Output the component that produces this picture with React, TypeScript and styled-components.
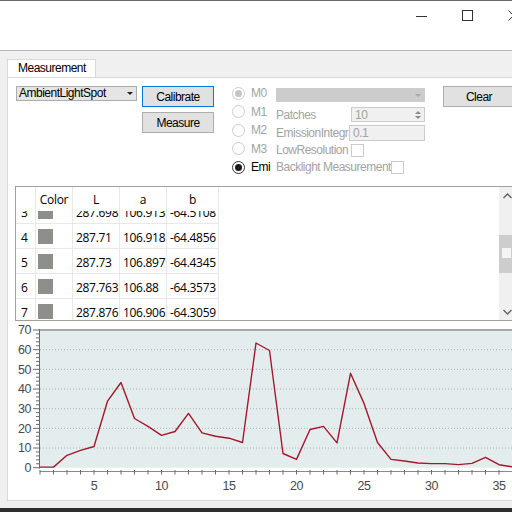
import React from 'react';
import styled, { createGlobalStyle } from 'styled-components';

const Global = createGlobalStyle`
  html, body { margin: 0; padding: 0; width: 512px; height: 512px; overflow: hidden; background: #f0f0f0; }
  #root { width: 512px; height: 512px; }
`;

const Page = styled.div`
  width: 512px;
  height: 512px;
  display: flex;
  flex-direction: column;
  background: #f0f0f0;
  overflow: hidden;
  font-family: "Liberation Sans", Arial, sans-serif;
  font-size: 12px;
  letter-spacing: -0.5px;
  color: #000;
`;

const TopEdge = styled.div`
  flex: none;
  height: 1px;
  background: #6a6a6a;
`;

const TitleBar = styled.div`
  flex: none;
  height: 49px;
  background: #fff;
  border-bottom: 1px solid #b6b6c2;
  display: flex;
  justify-content: flex-end;
  align-items: flex-start;
`;

const CaptionButtons = styled.div`
  display: flex;
  margin-right: -24px;
`;

const CaptionButton = styled.div`
  width: 46px;
  height: 29px;
  display: flex;
  align-items: center;
  justify-content: center;
`;

const Body = styled.div`
  flex: 1;
  min-height: 0;
  display: flex;
  flex-direction: column;
  padding: 8px 0 7px 7px;
`;

const BottomEdge = styled.div`
  flex: none;
  height: 4px;
  background: #2e2e2e;
`;

const TabStrip = styled.div`
  flex: none;
  display: flex;
`;

const Tab = styled.div`
  box-sizing: border-box;
  width: 89px;
  height: 18px;
  border: 1px solid #d9d9d9;
  border-bottom: none;
  background: #fff;
  padding-left: 10px;
  line-height: 17px;
`;

const TabPage = styled.div`
  flex: 1;
  min-height: 0;
  width: 530px;
  box-sizing: border-box;
  border: 1px solid #d9d9d9;
  background: #fff;
  display: flex;
  flex-direction: column;
`;

const ControlsRow = styled.div`
  flex: none;
  height: 100px;
  padding: 8px 0 0 8px;
  display: flex;
  align-items: flex-start;
`;

const Combo = styled.div<{ $width: number; $height: number; $disabled?: boolean }>`
  box-sizing: border-box;
  flex: none;
  width: ${p => p.$width}px;
  height: ${p => p.$height}px;
  border: 1px solid ${p => (p.$disabled ? '#cccccc' : '#acacac')};
  background: ${p => (p.$disabled ? '#cccccc' : '#e5e5e5')};
  display: flex;
  align-items: center;
  justify-content: space-between;
  padding: 0 3px 0 2px;
  line-height: 13px;
`;

const ComboArrow = styled.span<{ $disabled?: boolean }>`
  width: 0;
  height: 0;
  border-left: 3px solid transparent;
  border-right: 3px solid transparent;
  border-top: 3px solid ${p => (p.$disabled ? '#a8a8a8' : '#222')};
`;

const ButtonColumn = styled.div`
  display: flex;
  flex-direction: column;
  gap: 5px;
  margin-left: 5px;
`;

const PushButton = styled.button<{ $focused?: boolean }>`
  box-sizing: border-box;
  flex: none;
  width: 72px;
  height: 21px;
  padding: 0;
  margin: 0;
  background: #e1e1e1;
  border: 1px solid ${p => (p.$focused ? '#0078d7' : '#adadad')};
  font-family: inherit;
  font-size: 12px;
  font-weight: 400;
  letter-spacing: inherit;
  color: #000;
`;

const RadioColumn = styled.div`
  width: 40px;
  overflow: hidden;
  margin-left: 18px;
  margin-top: -2px;
  display: flex;
  flex-direction: column;
`;

const RadioItem = styled.div<{ $disabled?: boolean }>`
  height: 18.5px;
  display: flex;
  align-items: center;
  gap: 6px;
  white-space: nowrap;
  color: ${p => (p.$disabled ? '#a3a3a3' : '#000')};
`;

const RadioCircle = styled.span<{ $disabled?: boolean; $checked?: boolean }>`
  box-sizing: border-box;
  flex: none;
  width: 13px;
  height: 13px;
  border-radius: 50%;
  border: 1px solid ${p => (p.$disabled ? '#cccccc' : '#333')};
  background: #fff;
  display: flex;
  align-items: center;
  justify-content: center;
  &::after {
    content: '';
    display: ${p => (p.$checked ? 'block' : 'none')};
    width: 7px;
    height: 7px;
    border-radius: 50%;
    background: ${p => (p.$disabled ? '#c4c4c4' : '#1a1a1a')};
  }
`;

const OptionsColumn = styled.div`
  width: 149px;
  margin-left: 4px;
  display: flex;
  flex-direction: column;
`;

const OptionRow = styled.div<{ $mt: number }>`
  display: flex;
  align-items: center;
  margin-top: ${p => p.$mt}px;
  color: #a3a3a3;
  white-space: nowrap;
`;

const OptionLabel = styled.span<{ $width: number }>`
  flex: none;
  width: ${p => p.$width}px;
  overflow: hidden;
`;

const FieldBox = styled.div<{ $width: number; $height: number }>`
  box-sizing: border-box;
  flex: none;
  width: ${p => p.$width}px;
  height: ${p => p.$height}px;
  border: 1px solid #cccccc;
  background: #f0f0f0;
  display: flex;
  align-items: center;
  justify-content: space-between;
  padding: 0 3px 0 3px;
  color: #a3a3a3;
`;

const Spinner = styled.span`
  display: flex;
  flex-direction: column;
  gap: 2px;
`;

const SpinArrow = styled.span<{ $up?: boolean }>`
  width: 0;
  height: 0;
  border-left: 3px solid transparent;
  border-right: 3px solid transparent;
  ${p => (p.$up ? 'border-bottom: 3px solid #8a8a8a;' : 'border-top: 3px solid #8a8a8a;')}
`;

const CheckBox = styled.span`
  box-sizing: border-box;
  flex: none;
  width: 13px;
  height: 13px;
  border: 1px solid #cccccc;
  background: #fff;
`;

const ClearButton = styled(PushButton)`
  margin-left: 18px;
`;

const Table = styled.div`
  flex: none;
  box-sizing: border-box;
  width: 502px;
  height: 135px;
  margin-left: 7px;
  border: 1px solid #a0a0a0;
  background: #fff;
  display: flex;
  font-family: "Open Sans", "Noto Sans", sans-serif;
  letter-spacing: -0.3px;
  color: #000;
`;

const GridArea = styled.div`
  flex: 1;
  min-width: 0;
  display: flex;
  flex-direction: column;
`;

const COLS = '20px 37px 47px 47px 52px';

const HeaderRow = styled.div`
  flex: none;
  height: 24px;
  display: grid;
  grid-template-columns: ${COLS};
`;

const HeaderCell = styled.div`
  border-right: 1px solid #e8e8e8;
  display: flex;
  align-items: center;
  justify-content: center;
  padding-top: 1px;
`;

const Viewport = styled.div`
  flex: 1;
  min-height: 0;
  overflow: hidden;
`;

const RowList = styled.div<{ $scroll: number }>`
  margin-top: -${p => p.$scroll}px;
`;

const DataRow = styled.div`
  box-sizing: border-box;
  height: 25px;
  display: grid;
  grid-template-columns: ${COLS};
`;

const Cell = styled.div<{ $pad?: number }>`
  box-sizing: border-box;
  border-right: 1px solid #e8e8e8;
  border-bottom: 1px solid #e8e8e8;
  display: flex;
  align-items: center;
  padding: 2px 0 0 ${p => p.$pad ?? 3}px;
  white-space: nowrap;
`;

const Swatch = styled.span`
  width: 15px;
  height: 15px;
  background: #8d8f8b;
  margin-top: -2px;
`;

const ScrollBar = styled.div`
  flex: none;
  width: 17px;
  background: #f0f0f0;
  display: flex;
  flex-direction: column;
`;

const ScrollArrow = styled.div`
  flex: none;
  height: 17px;
  display: flex;
  align-items: center;
  justify-content: center;
`;

const ScrollTrack = styled.div`
  flex: 1;
  display: flex;
  flex-direction: column;
`;

const ScrollThumb = styled.div<{ $offset: number; $size: number }>`
  margin-top: ${p => p.$offset}px;
  height: ${p => p.$size}px;
  background: #cdcdcd;
  display: flex;
  flex-direction: column;
  align-items: flex-start;
`;

const ThumbGlint = styled.span`
  width: 9px;
  height: 10px;
  margin: 13px 0 0 3px;
  background: #f4f4f4;
`;

const ChartBox = styled.div`
  flex: none;
  height: 179px;
  overflow: hidden;
`;

const rows = [
  { n: 3, L: '287.698', a: '106.913', b: '-64.5108' },
  { n: 4, L: '287.71', a: '106.918', b: '-64.4856' },
  { n: 5, L: '287.73', a: '106.897', b: '-64.4345' },
  { n: 6, L: '287.763', a: '106.88', b: '-64.3573' },
  { n: 7, L: '287.876', a: '106.906', b: '-64.3059' },
];

const series = [
  0.3, 0.3, 6.3, 8.8, 10.8, 33.8, 43.3, 25, 21, 16.4, 18.4, 27.6, 17.7, 16, 15, 12.8,
  63.4, 59.6, 7.2, 4.2, 19.4, 21, 12.6, 48, 32.7, 12.8, 4.2, 3.4, 2.4, 2.1, 2.1, 1.6,
  2.2, 5.3, 1.5, 0.4, 0.3,
];

const X0 = 32;
const XU = 13.5;
const YB = 146.7;
const YU = 1.967;
const PW = 480;

const px = (i: number) => X0 + (i - 1) * XU;
const py = (v: number) => YB - v * YU;

function Chart() {
  const points = series.map((v, i) => `${px(i + 1).toFixed(1)},${py(v).toFixed(1)}`).join(' ');
  const majors = [0, 10, 20, 30, 40, 50, 60, 70];
  const minors: number[] = [];
  for (let v = 0; v <= 70; v += 2) minors.push(v);
  const xTicks: number[] = [];
  for (let i = 1; i <= 37; i++) xTicks.push(i);
  return (
    <svg width="504" height="179" viewBox="0 0 504 179">
      <defs>
        <clipPath id="plotclip">
          <rect x={X0} y={8} width={PW} height={YB - 8 + 1} />
        </clipPath>
      </defs>
      <rect x={X0} y={9} width={PW} height={YB - 9} fill="#e3eded" />
      {majors.slice(1, 7).map(v => (
        <line key={v} x1={X0} x2={X0 + PW} y1={py(v)} y2={py(v)} stroke="#b3b3b3" strokeWidth="1" strokeDasharray="1 2" />
      ))}
      <line x1={X0} x2={X0 + PW} y1={9} y2={9} stroke="#a6a6a6" strokeWidth="2" />
      <line x1={31.5} x2={31.5} y1={8} y2={YB + 1} stroke="#6a6a6a" strokeWidth="1" />
      {minors.map(v => (
        <line key={v} x1={v % 10 === 0 ? 25 : 28} x2={31.5} y1={py(v)} y2={py(v)} stroke="#6a6a6a" strokeWidth="1" />
      ))}
      {majors.map(v => (
        <text key={v} x={23} y={py(v) + 4.3} textAnchor="end" fontFamily='"Liberation Sans", Arial, sans-serif' fontSize="12.5" fill="#4a4a4a">
          {v}
        </text>
      ))}
      <line x1={X0} x2={X0 + PW} y1={150.5} y2={150.5} stroke="#8a8a8a" strokeWidth="1" />
      {xTicks.map(i => (
        <line key={i} x1={px(i)} x2={px(i)} y1={149} y2={153.5} stroke="#6a6a6a" strokeWidth="1" />
      ))}
      {[5, 10, 15, 20, 25, 30, 35].map(i => (
        <text key={i} x={px(i)} y={169} textAnchor="middle" fontFamily='"Liberation Sans", Arial, sans-serif' fontSize="12.5" fill="#4a4a4a">
          {i}
        </text>
      ))}
      <polyline points={points} fill="none" stroke="#a5172a" strokeWidth="1.4" strokeLinejoin="round" clipPath="url(#plotclip)" />
    </svg>
  );
}

export default function App() {
  return (
    <>
      <Global />
      <Page>
        <TopEdge />
        <TitleBar>
          <CaptionButtons>
            <CaptionButton>
              <svg width="11" height="10" viewBox="0 0 11 10">
                <line x1="0" y1="5.5" x2="11" y2="5.5" stroke="#333" strokeWidth="1" />
              </svg>
            </CaptionButton>
            <CaptionButton>
              <svg width="11" height="11" viewBox="0 0 11 11">
                <rect x="0.5" y="0.5" width="10" height="10" fill="none" stroke="#333" strokeWidth="1" />
              </svg>
            </CaptionButton>
            <CaptionButton>
              <svg width="11" height="11" viewBox="0 0 11 11">
                <path d="M0.5 0.5 L10.5 10.5 M10.5 0.5 L0.5 10.5" stroke="#333" strokeWidth="1" />
              </svg>
            </CaptionButton>
          </CaptionButtons>
        </TitleBar>
        <Body>
          <TabStrip>
            <Tab>Measurement</Tab>
          </TabStrip>
          <TabPage>
            <ControlsRow>
              <Combo $width={121} $height={15}>
                <span>AmbientLightSpot</span>
                <ComboArrow />
              </Combo>
              <ButtonColumn>
                <PushButton $focused>Calibrate</PushButton>
                <PushButton>Measure</PushButton>
              </ButtonColumn>
              <RadioColumn>
                <RadioItem $disabled>
                  <RadioCircle $disabled $checked />
                  M0
                </RadioItem>
                <RadioItem $disabled>
                  <RadioCircle $disabled />
                  M1
                </RadioItem>
                <RadioItem $disabled>
                  <RadioCircle $disabled />
                  M2
                </RadioItem>
                <RadioItem $disabled>
                  <RadioCircle $disabled />
                  M3
                </RadioItem>
                <RadioItem>
                  <RadioCircle $checked />
                  Emi
                </RadioItem>
              </RadioColumn>
              <OptionsColumn>
                <OptionRow $mt={2}>
                  <Combo $width={149} $height={14} $disabled>
                    <span />
                    <ComboArrow $disabled />
                  </Combo>
                </OptionRow>
                <OptionRow $mt={5}>
                  <OptionLabel $width={75}>Patches</OptionLabel>
                  <FieldBox $width={74} $height={15}>
                    <span>10</span>
                    <Spinner>
                      <SpinArrow $up />
                      <SpinArrow />
                    </Spinner>
                  </FieldBox>
                </OptionRow>
                <OptionRow $mt={3}>
                  <OptionLabel $width={73}>EmissionIntegra</OptionLabel>
                  <FieldBox $width={76} $height={16}>
                    <span>0.1</span>
                  </FieldBox>
                </OptionRow>
                <OptionRow $mt={2}>
                  <OptionLabel $width={75}>LowResolution</OptionLabel>
                  <CheckBox />
                </OptionRow>
                <OptionRow $mt={3}>
                  <OptionLabel $width={115}>Backlight Measurement</OptionLabel>
                  <CheckBox />
                </OptionRow>
              </OptionsColumn>
              <ClearButton>Clear</ClearButton>
            </ControlsRow>
            <Table>
              <GridArea>
                <HeaderRow>
                  <HeaderCell />
                  <HeaderCell>Color</HeaderCell>
                  <HeaderCell>L</HeaderCell>
                  <HeaderCell>a</HeaderCell>
                  <HeaderCell>b</HeaderCell>
                </HeaderRow>
                <Viewport>
                  <RowList $scroll={12}>
                    {rows.map(r => (
                      <DataRow key={r.n}>
                        <Cell $pad={5}>{r.n}</Cell>
                        <Cell $pad={2}>
                          <Swatch />
                        </Cell>
                        <Cell>{r.L}</Cell>
                        <Cell>{r.a}</Cell>
                        <Cell>{r.b}</Cell>
                      </DataRow>
                    ))}
                  </RowList>
                </Viewport>
              </GridArea>
              <ScrollBar>
                <ScrollArrow>
                  <svg width="9" height="6" viewBox="0 0 9 6">
                    <polyline points="0.5,5 4.5,1 8.5,5" fill="none" stroke="#606060" strokeWidth="1.3" />
                  </svg>
                </ScrollArrow>
                <ScrollTrack>
                  <ScrollThumb $offset={31} $size={38}>
                    <ThumbGlint />
                  </ScrollThumb>
                </ScrollTrack>
                <ScrollArrow>
                  <svg width="9" height="6" viewBox="0 0 9 6">
                    <polyline points="0.5,1 4.5,5 8.5,1" fill="none" stroke="#606060" strokeWidth="1.3" />
                  </svg>
                </ScrollArrow>
              </ScrollBar>
            </Table>
            <ChartBox>
              <Chart />
            </ChartBox>
          </TabPage>
        </Body>
        <BottomEdge />
      </Page>
    </>
  );
}
